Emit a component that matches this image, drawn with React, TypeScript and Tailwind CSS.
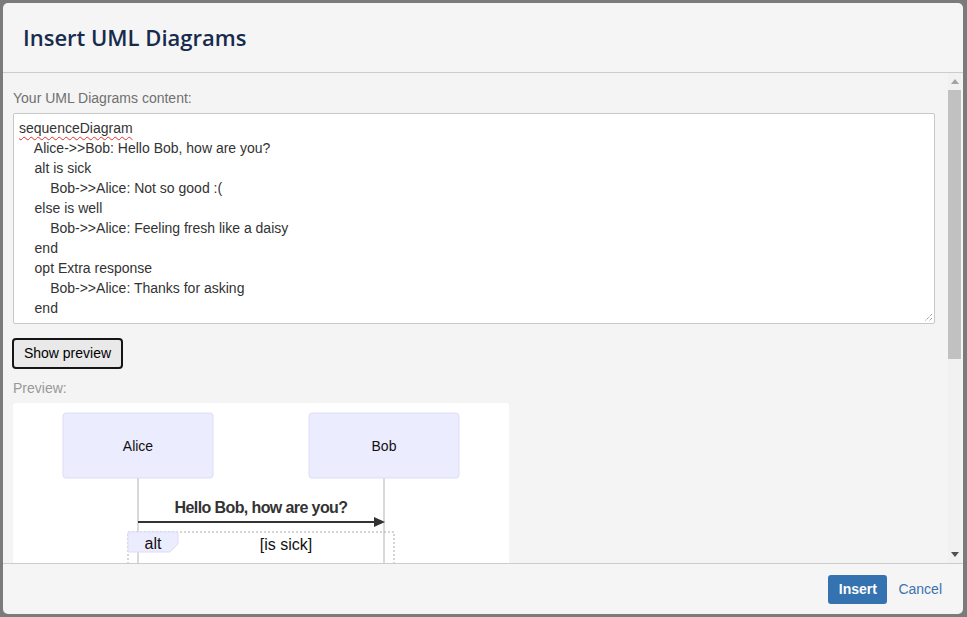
import React from 'react';

const UML_SOURCE = [
  { text: 'sequenceDiagram', indent: 0, misspelled: true },
  { text: 'Alice->>Bob: Hello Bob, how are you?', indent: 1 },
  { text: 'alt is sick', indent: 1 },
  { text: 'Bob->>Alice: Not so good :(', indent: 2 },
  { text: 'else is well', indent: 1 },
  { text: 'Bob->>Alice: Feeling fresh like a daisy', indent: 2 },
  { text: 'end', indent: 1 },
  { text: 'opt Extra response', indent: 1 },
  { text: 'Bob->>Alice: Thanks for asking', indent: 2 },
  { text: 'end', indent: 1 },
];

const ACTOR_FILL = '#ECECFF';
const ACTOR_STROKE = '#dcdcf8';
const FONT = "'Liberation Sans', Arial, sans-serif";

const Actor: React.FC<{ x: number; y: number; label: string }> = ({ x, y, label }) => (
  <g>
    <rect x={x} y={y} width={150} height={65} rx={3} fill={ACTOR_FILL} stroke={ACTOR_STROKE} strokeWidth={1} />
    <text x={x + 75} y={y + 38} textAnchor="middle" fontSize={14} fill="#111" fontFamily={FONT}>
      {label}
    </text>
  </g>
);

// only the top of the diagram is in view; the rest sits below the scroll fold
const SequencePreview: React.FC = () => (
  <svg width={496} height={440} viewBox="0 0 496 440" className="block">
    <line x1={125} y1={75} x2={125} y2={430} stroke="#ccc" strokeWidth={1.5} />
    <line x1={371} y1={75} x2={371} y2={430} stroke="#ccc" strokeWidth={1.5} />

    <Actor x={50} y={10} label="Alice" />
    <Actor x={296} y={10} label="Bob" />

    <text x={248} y={110} textAnchor="middle" fontSize={16} fontWeight={700} letterSpacing={-0.6} fill="#333" fontFamily={FONT}>
      Hello Bob, how are you?
    </text>
    <line x1={125} y1={119} x2={363} y2={119} stroke="#333" strokeWidth={2} />
    <polygon points="361,114 372,119 361,124" fill="#333" />

    <rect x={115} y={129} width={266} height={300} fill="none" stroke="#aaa" strokeWidth={1} strokeDasharray="2 2" />
    <polygon points="115,129 165,129 165,141 157,149 115,149" fill={ACTOR_FILL} stroke={ACTOR_STROKE} />
    <text x={140} y={146} textAnchor="middle" fontSize={16} fill="#111" fontFamily={FONT}>
      alt
    </text>
    <text x={273} y={147} textAnchor="middle" fontSize={16} fill="#111" fontFamily={FONT}>
      [is sick]
    </text>
  </svg>
);

const App: React.FC = () => {
  return (
    <div className="h-[617px] w-[967px] bg-[#7b7b7b] pt-[3px] pl-[3px] pr-[4px] pb-[3px] font-['Liberation_Sans',Arial,sans-serif]">
      <div className="flex h-full flex-col overflow-hidden rounded-[5px] bg-[#f5f5f5]">
        {/* Header */}
        <div className="flex h-[70px] shrink-0 items-center border-b border-[#cccccc] px-[20px]">
          <h1 className="font-['Open_Sans',sans-serif] text-[22px] font-semibold text-[#172b4d]">Insert UML Diagrams</h1>
        </div>

        {/* Body */}
        <div className="flex min-h-0 flex-1 bg-[#f4f4f4]">
          <div className="min-w-0 flex-1 overflow-hidden pt-[15px] pl-[10px] pr-[13px]">
            <label className="block text-[14px] leading-5 text-[#707070]">Your UML Diagrams content:</label>
            <div className="relative mt-[5px] h-[211px] rounded-[2px] border border-[#c8c8c8] bg-white pt-[4px] pb-[5px] pl-[5px] text-[14px] leading-5 text-[#333]">
              {UML_SOURCE.map((line, i) => (
                <div key={i} className="whitespace-pre">
                  {'    '.repeat(line.indent)}
                  {line.misspelled ? (
                    <span className="underline decoration-[#e03030] decoration-wavy decoration-1 underline-offset-[3px]">{line.text}</span>
                  ) : (
                    line.text
                  )}
                </div>
              ))}
              <svg className="absolute right-[1px] bottom-[1px]" width="10" height="10" viewBox="0 0 10 10">
                <line x1="9" y1="2" x2="2" y2="9" stroke="#777" strokeWidth="1" strokeDasharray="1 1" />
                <line x1="9" y1="6" x2="6" y2="9" stroke="#777" strokeWidth="1" strokeDasharray="1 1" />
              </svg>
            </div>

            <button className="mt-[14px] -ml-px h-[31px] w-[111px] rounded-[4px] border-2 border-[#151515] bg-[#e9e9e9] text-[14px] text-black">
              Show preview
            </button>

            <div className="mt-[9px] text-[14px] leading-5 text-[#999]">Preview:</div>
            <div className="mt-[5px] w-[496px] rounded-[3px] bg-white">
              <SequencePreview />
            </div>
          </div>

          {/* Scrollbar */}
          <div className="mr-[2px] flex w-[13px] shrink-0 flex-col bg-[#f1f1f1]">
            <div className="flex h-[17px] items-center justify-center">
              <svg width="8" height="5" viewBox="0 0 8 5">
                <polygon points="4,0 8,5 0,5" fill="#a3a3a3" />
              </svg>
            </div>
            <div className="h-[269px] bg-[#c1c1c1]" />
            <div className="flex-1" />
            <div className="flex h-[17px] items-center justify-center">
              <svg width="8" height="5" viewBox="0 0 8 5">
                <polygon points="0,0 8,0 4,5" fill="#505050" />
              </svg>
            </div>
          </div>
        </div>

        {/* Footer */}
        <div className="flex h-[51px] shrink-0 items-center justify-end gap-[11px] border-t border-[#cccccc] pr-[21px]">
          <button className="h-[29px] w-[59px] rounded-[3px] bg-[#3572b0] text-[14px] font-bold text-white">Insert</button>
          <a className="text-[14px] text-[#3b73af]">Cancel</a>
        </div>
      </div>
    </div>
  );
};

export default App;
